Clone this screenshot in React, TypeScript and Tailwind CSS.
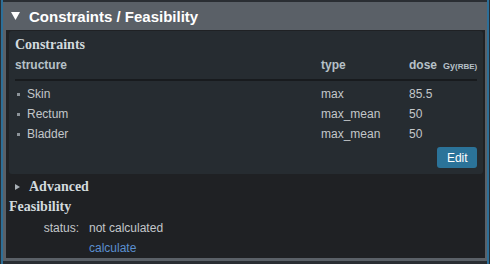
export default function App() {
  const rows = [
    { name: "Skin", type: "max", dose: "85.5" },
    { name: "Rectum", type: "max_mean", dose: "50" },
    { name: "Bladder", type: "max_mean", dose: "50" },
  ];
  const sans = "font-['Liberation_Sans',Arial,sans-serif]";
  const serif = "font-['Liberation_Serif','Times_New_Roman',serif]";

  return (
    <div className={`flex h-[264px] w-[490px] bg-[#2a2e33] pl-px pr-[3px] ${sans}`}>
      <div className="flex flex-1 flex-col border-x-2 border-[#2d6f98] pt-[2px] pb-[3px]">
        <div className="flex flex-1 flex-col border-l-[3px] border-r-[2px] border-b-[3px] border-[#5a6067] bg-[#1f2124]">
          {/* panel header */}
          <div className="flex h-[28px] shrink-0 items-center bg-[#5a6067] pl-[5px]">
            <svg width="9" height="8" viewBox="0 0 9 8" className="mr-[9px]">
              <polygon points="0,0 9,0 4.5,8" fill="#ffffff" />
            </svg>
            <span className="text-[15px] font-bold leading-none text-white">
              Constraints / Feasibility
            </span>
          </div>

          <div className="flex flex-1 flex-col pl-[3px] pr-[2px]">
            {/* constraints card */}
            <div className="mt-px rounded-[3px] bg-[#262c31] px-[6px] pt-[4px] pb-[6px]">
              <div className={`h-[20px] text-[14px] font-bold leading-[20px] text-[#d2dade] ${serif}`}>
                Constraints
              </div>
              <div className="grid h-[26px] grid-cols-[306px_88px_1fr] border-b-2 border-[#181b1e] pb-[4px] text-[12px] font-bold leading-[20px] text-[#b6c1c8]">
                <span>structure</span>
                <span>type</span>
                <span className="flex items-baseline">
                  dose
                  <span className="ml-[6px] text-[9px]">Gy</span>
                  <span className="text-[8px]">(RBE)</span>
                </span>
              </div>
              <div className="mt-[3px]">
                {rows.map((r) => (
                  <div
                    key={r.name}
                    className="grid h-[20px] grid-cols-[306px_88px_1fr] items-center text-[12px] leading-[20px] text-[#c3c7ca]"
                  >
                    <span className="flex items-center">
                      <span className="ml-[2px] mr-[7px] h-[3px] w-[3px] bg-[#8c9399]" />
                      {r.name}
                    </span>
                    <span>{r.type}</span>
                    <span>{r.dose}</span>
                  </div>
                ))}
              </div>
              <div className="mt-[3px] flex justify-end">
                <button className="h-[21px] w-[40px] rounded-[3px] bg-[#2b7399] text-[12px] leading-none text-white">
                  Edit
                </button>
              </div>
            </div>

            <div className={`mt-[3px] flex h-[20px] items-center pl-[6px] text-[14px] font-bold leading-[20px] text-[#d2dade] ${serif}`}>
              <svg width="5" height="6" viewBox="0 0 5 6" className="mr-[9px]">
                <polygon points="0,0 5,3 0,6" fill="#a9b0b6" />
              </svg>
              Advanced
            </div>
            <div className={`h-[20px] text-[14px] font-bold leading-[20px] text-[#d2dade] ${serif}`}>
              Feasibility
            </div>
            <div className="mt-px grid grid-cols-[70px_1fr] text-[12px] leading-[20px] text-[#c3c7ca]">
              <span className="text-right">status:</span>
              <span className="pl-[10px]">not calculated</span>
              <span />
              <span className="pl-[10px] text-[#5b8fcf]">calculate</span>
            </div>
          </div>
        </div>
      </div>
    </div>
  );
}
